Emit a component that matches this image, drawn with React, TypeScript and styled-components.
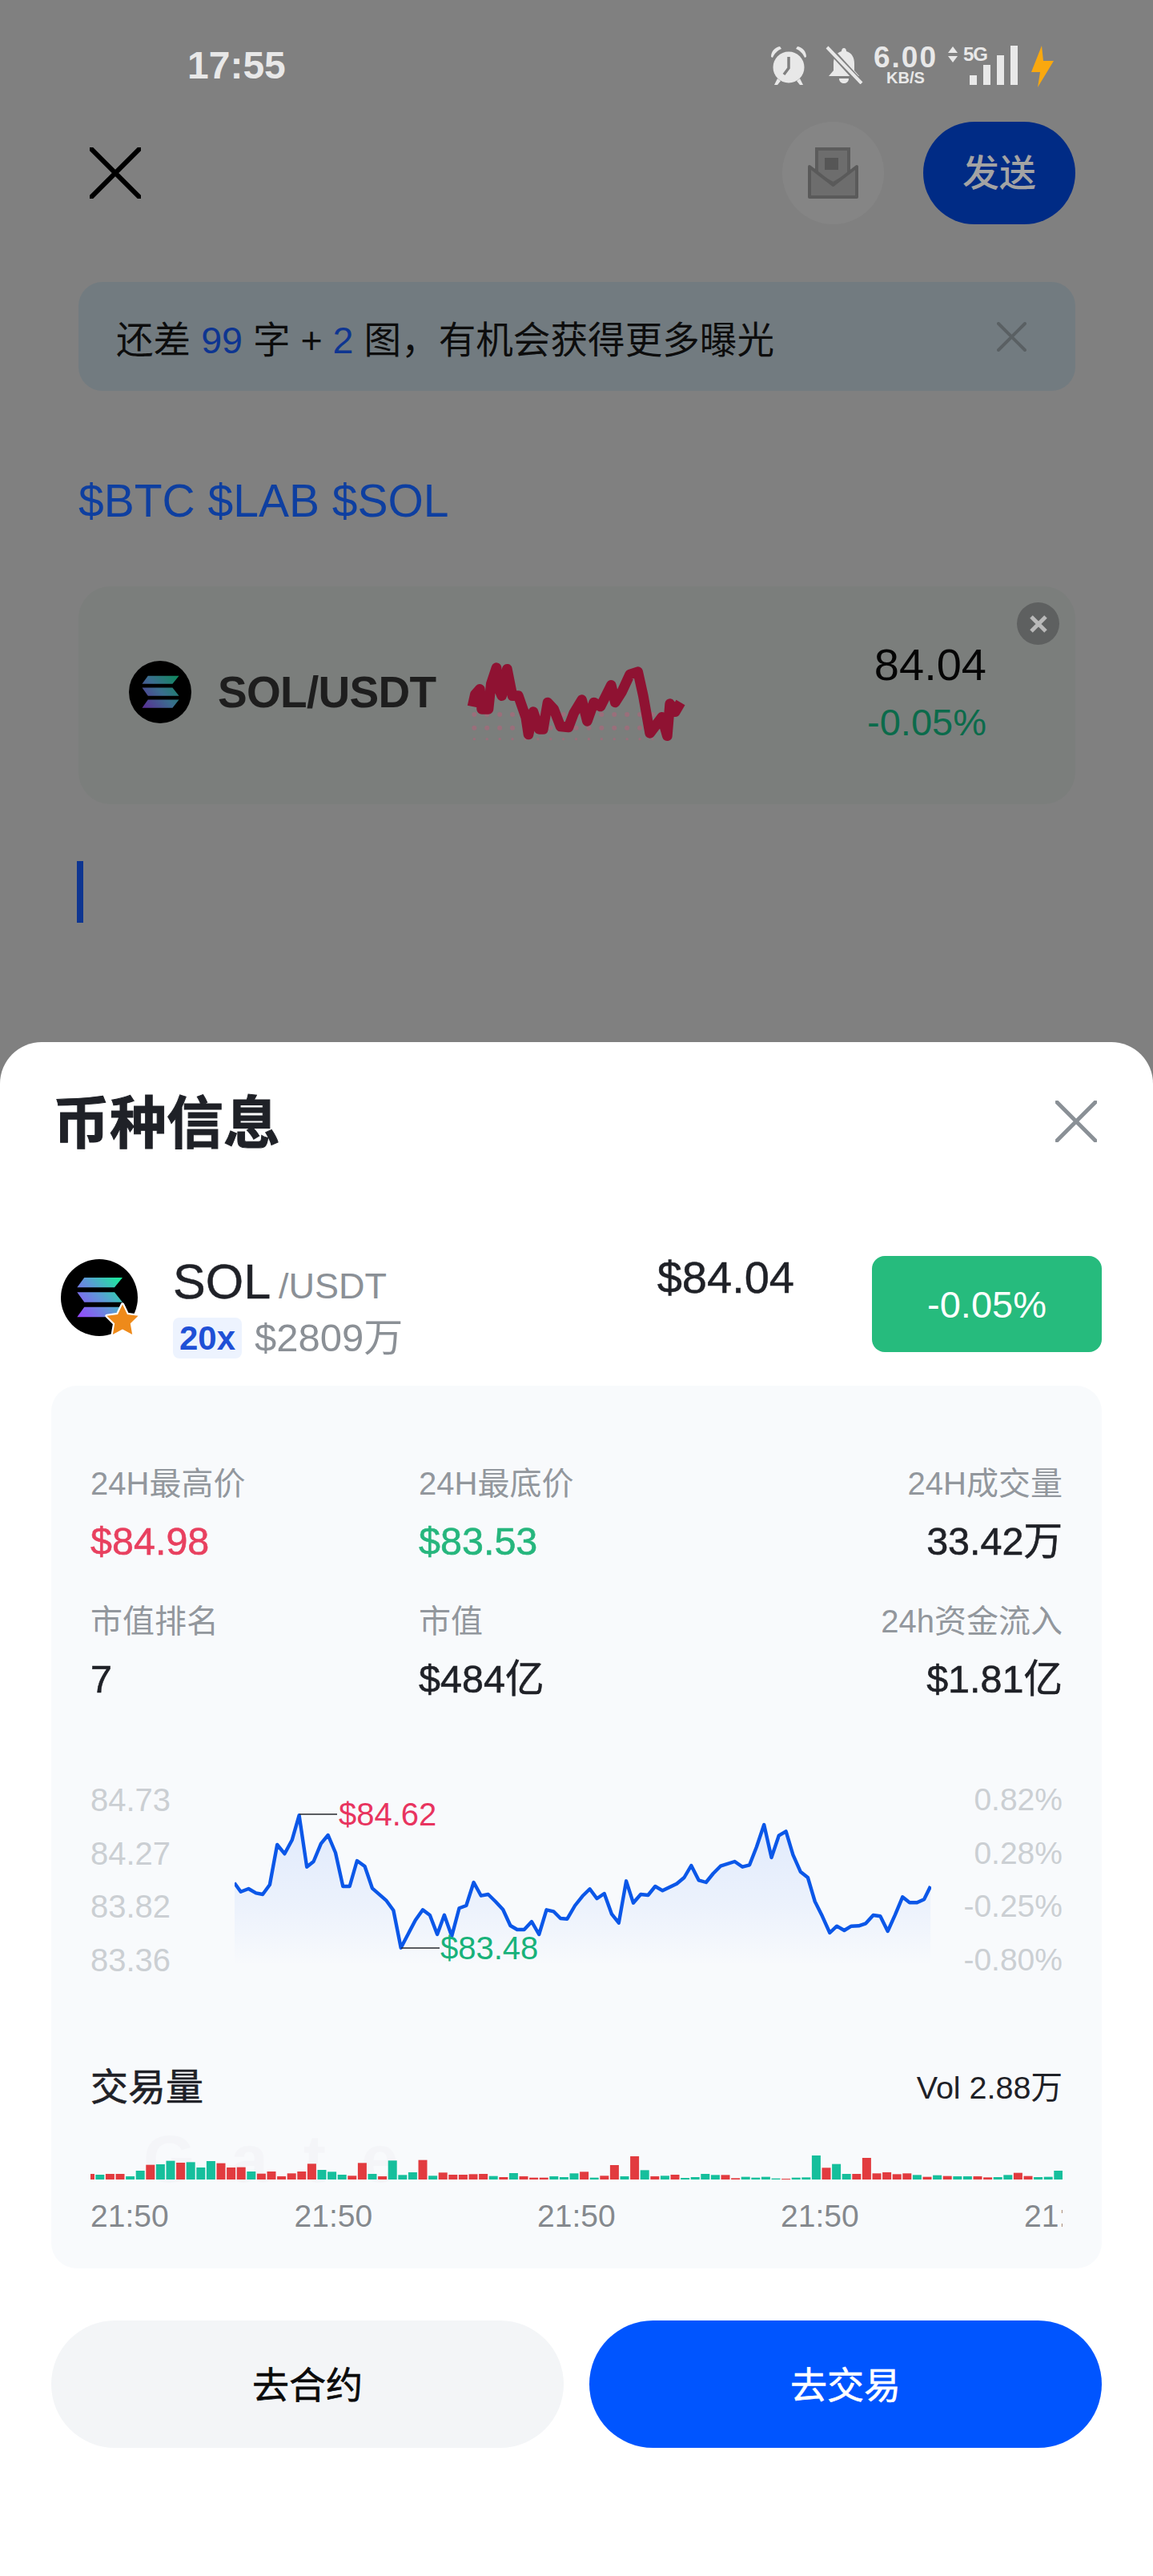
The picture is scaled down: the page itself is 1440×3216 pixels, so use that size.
import React from 'react';
import styled, { createGlobalStyle } from 'styled-components';

const SANS = '"Liberation Sans", "Noto Sans CJK SC", sans-serif';

const GlobalStyle = createGlobalStyle`
	html, body {
		margin: 0;
		padding: 0;
		background: #808080;
	}
	* {
		box-sizing: border-box;
	}
	body {
		font-family: ${SANS};
	}
`;

const Page = styled.div`
	width: 1440px;
	height: 3216px;
	display: flex;
	flex-direction: column;
	overflow: hidden;
	background: #808080;
`;

const Backdrop = styled.div`
	height: 1301px;
	padding: 0 97px 0 98px;
`;

const StatusBar = styled.div`
	height: 152px;
	padding: 57px 27px 0 136px;
	display: flex;
	align-items: flex-start;
	color: #e8e8e8;
`;

const Clock = styled.div`
	font-size: 48px;
	line-height: 50px;
	font-weight: 700;
	margin-right: auto;
`;

const StatusIcon = styled.svg`
	display: block;
	flex: none;
`;

const Speed = styled.div`
	width: 82px;
	margin-left: 12px;
	display: flex;
	flex-direction: column;
	align-items: center;
	font-weight: 700;
`;

const SpeedValue = styled.span`
	font-size: 37px;
	line-height: 30px;
	letter-spacing: 2px;
`;

const SpeedUnit = styled.span`
	font-size: 20px;
	line-height: 20px;
`;

const Network = styled.div`
	position: relative;
	width: 89px;
	height: 50px;
	margin-left: 11px;
`;

const FiveG = styled.span`
	position: absolute;
	left: 20px;
	top: -2px;
	font-size: 24px;
	line-height: 26px;
	font-weight: 700;
	letter-spacing: -1px;
`;

const NavRow = styled.div`
	height: 128px;
	display: flex;
	align-items: center;
`;

const CloseGlyph = styled.svg`
	display: block;
	flex: none;
`;

const NavClose = styled.div`
	margin-left: 14px;
`;

const SheetClose = styled.div`
	margin-top: -6px;
`;

const DraftButton = styled.div`
	width: 127px;
	height: 128px;
	margin-left: auto;
	border-radius: 50%;
	background: #858585;
	display: flex;
	align-items: center;
	justify-content: center;
`;

const SendButton = styled.div`
	width: 190px;
	height: 128px;
	margin-left: 49px;
	padding-bottom: 8px;
	border-radius: 64px;
	background: #002b85;
	color: #a3a3a3;
	font-size: 46px;
	font-weight: 500;
	display: flex;
	align-items: center;
	justify-content: center;
`;

const Banner = styled.div`
	height: 136px;
	margin-top: 72px;
	padding: 0 61px 0 47px;
	border-radius: 30px;
	background: #727b80;
	display: flex;
	align-items: center;
	justify-content: space-between;
	color: #0d0d0d;
	font-size: 46.6px;
`;

const BannerHint = styled.span`
	color: #0e3591;
`;

const Tags = styled.div`
	height: 60px;
	margin-top: 107px;
	color: #0e3fa0;
	font-size: 57px;
	line-height: 60px;
`;

const PairCard = styled.div`
	position: relative;
	height: 272px;
	margin-top: 77px;
	padding: 0 111px 8px 63px;
	border-radius: 40px;
	background: #7b7e7c;
	display: flex;
	align-items: center;
`;

const PairName = styled.div`
	margin-left: 33px;
	color: #1e1e1e;
	font-size: 55px;
	font-weight: 700;
	letter-spacing: -0.7px;
`;

const Spark = styled.svg`
	display: block;
	flex: none;
	margin: 16px 0 0 16px;
`;

const PairQuote = styled.div`
	margin-left: auto;
	display: flex;
	flex-direction: column;
	align-items: flex-end;
`;

const PairPrice = styled.span`
	color: #050505;
	font-size: 56px;
	line-height: 64px;
`;

const PairChange = styled.span`
	margin-top: 12px;
	color: #0b6b4b;
	font-size: 47px;
	line-height: 56px;
`;

const RemoveBadge = styled.div`
	position: absolute;
	top: 20px;
	right: 20px;
	width: 53px;
	height: 53px;
	border-radius: 50%;
	background: #5e6060;
	display: flex;
	align-items: center;
	justify-content: center;
`;

const Caret = styled.div`
	width: 8px;
	height: 77px;
	margin: 71px 0 0 -2px;
	background: #0e3591;
`;

const Sheet = styled.div`
	flex: 1;
	padding: 69px 64px 0;
	background: #ffffff;
	border-radius: 52px 52px 0 0;
`;

const SheetHeader = styled.div`
	height: 66px;
	padding: 0 6px 0 2px;
	display: flex;
	align-items: center;
	justify-content: space-between;
`;

const SheetTitle = styled.h1`
	margin: 0;
	color: #1f2127;
	font-size: 71px;
	line-height: 66px;
	font-weight: 700;
	-webkit-text-stroke: 1px #1f2127;
`;

const CoinRow = styled.div`
	height: 120px;
	margin-top: 132px;
	display: flex;
	align-items: flex-start;
`;

const CoinIcon = styled.div`
	position: relative;
	width: 96px;
	height: 96px;
	margin: 4px 0 0 12px;
	flex: none;
`;

const StarMark = styled.svg`
	position: absolute;
	left: 52px;
	top: 51px;
`;

const CoinText = styled.div`
	margin-left: 44px;
`;

const CoinName = styled.div`
	height: 64px;
	display: flex;
	align-items: baseline;
	color: #1f2127;
	font-size: 61px;
	line-height: 64px;
	-webkit-text-stroke: 0.5px #1f2127;
`;

const CoinQuote = styled.span`
	margin-left: 10px;
	color: #8b9096;
	font-size: 45px;
	-webkit-text-stroke: 0;
`;

const CoinMeta = styled.div`
	margin-top: 13px;
	height: 51px;
	display: flex;
	align-items: center;
`;

const Leverage = styled.span`
	height: 51px;
	padding: 0 8px;
	border-radius: 8px;
	background: #edf3fe;
	color: #1f50d6;
	font-size: 42px;
	line-height: 51px;
	font-weight: 700;
`;

const MarketCap = styled.span`
	margin-left: 16px;
	color: #8b9096;
	font-size: 49px;
	line-height: 51px;
`;

const CoinPrice = styled.div`
	margin-left: auto;
	margin-top: -3px;
	color: #1f2127;
	font-size: 56px;
	line-height: 60px;
	-webkit-text-stroke: 0.5px #1f2127;
`;

const ChangePill = styled.div`
	width: 287px;
	height: 120px;
	margin-left: 97px;
	border-radius: 16px;
	background: #26bb7d;
	color: #ffffff;
	font-size: 47px;
	display: flex;
	align-items: center;
	justify-content: center;
`;

const Panel = styled.div`
	height: 1102px;
	margin-top: 42px;
	padding: 97px 49px 0;
	border-radius: 32px;
	background: #f8fafc;
`;

const StatsGrid = styled.div`
	display: grid;
	grid-template-columns: 410px 1fr auto;
	row-gap: 45px;
`;

const Stat = styled.div<{ $right?: boolean }>`
	display: flex;
	flex-direction: column;
	align-items: ${(p) => (p.$right ? 'flex-end' : 'flex-start')};
`;

const StatLabel = styled.span`
	color: #92979d;
	font-size: 40px;
	line-height: 50px;
`;

const StatValue = styled.span<{ $tone?: 'up' | 'down' }>`
	margin-top: 17px;
	color: ${(p) => (p.$tone === 'up' ? '#e8405f' : p.$tone === 'down' ? '#26b67d' : '#1f2127')};
	font-size: 48.5px;
	line-height: 60px;
	-webkit-text-stroke: 0.6px currentColor;
`;

const ChartRow = styled.div`
	height: 267px;
	margin-top: 88px;
	display: flex;
`;

const AxisColumn = styled.div<{ $right?: boolean }>`
	flex: ${(p) => (p.$right ? '1' : '0 0 180px')};
	display: flex;
	flex-direction: column;
	align-items: ${(p) => (p.$right ? 'flex-end' : 'flex-start')};
`;

const AxisLabel = styled.span<{ $right?: boolean }>`
	height: 66.7px;
	color: #cbcfd3;
	font-size: ${(p) => (p.$right ? 39 : 40)}px;
	line-height: 66.7px;
`;

const Plot = styled.svg`
	display: block;
	flex: none;
`;

const PlotNote = styled.text<{ $tone: 'up' | 'down' }>`
	fill: ${(p) => (p.$tone === 'up' ? '#e8345f' : '#18b27a')};
	font-family: ${SANS};
	font-size: 40px;
`;

const VolumeHead = styled.div`
	height: 50px;
	margin-top: 95px;
	display: flex;
	align-items: center;
	justify-content: space-between;
	color: #1f2127;
`;

const VolumeTitle = styled.span`
	font-size: 47px;
	-webkit-text-stroke: 0.6px #1f2127;
`;

const VolumeValue = styled.span`
	font-size: 39.5px;
	margin-top: 2px;
`;

const VolumeArea = styled.div`
	position: relative;
	height: 95px;
	display: flex;
	align-items: flex-end;
`;

const Watermark = styled.span`
	position: absolute;
	left: 66px;
	top: 34px;
	color: #f4f5f8;
	font-size: 84px;
	line-height: 70px;
	font-weight: 700;
	letter-spacing: 44px;
`;

const VolumeBars = styled.svg`
	position: relative;
	display: block;
`;

const Ticks = styled.div`
	height: 46px;
	margin-top: 23px;
	display: flex;
	overflow: hidden;
`;

const Tick = styled.span<{ $w: number }>`
	flex: none;
	width: ${(p) => p.$w}px;
	color: #85898e;
	font-size: 39px;
	line-height: 46px;
	white-space: nowrap;
`;

const Actions = styled.div`
	margin-top: 65px;
	display: flex;
	gap: 32px;
`;

const ActionButton = styled.div<{ $primary?: boolean }>`
	width: 640px;
	height: 159px;
	padding-bottom: 6px;
	border-radius: 80px;
	background: ${(p) => (p.$primary ? '#0055ff' : '#f3f5f7')};
	color: ${(p) => (p.$primary ? '#ffffff' : '#0b0b0b')};
	font-size: 46px;
	-webkit-text-stroke: 0.6px currentColor;
	display: flex;
	align-items: center;
	justify-content: center;
`;

const X = ({ size, stroke, width }: { size: number; stroke: string; width: number }) => (
	<CloseGlyph width={size} height={size} viewBox={`0 0 ${size} ${size}`}>
		<path d={`M2 2L${size - 2} ${size - 2}M${size - 2} 2L2 ${size - 2}`} stroke={stroke} strokeWidth={width} strokeLinecap="round" />
	</CloseGlyph>
);

const SolanaMark = ({ size, id, dim }: { size: number; id: string; dim?: boolean }) => (
	<svg width={size} height={size} viewBox="0 0 96 96" style={{ display: 'block', flex: 'none' }}>
		<defs>
			<linearGradient id={id} x1="20" y1="72" x2="77" y2="23" gradientUnits="userSpaceOnUse">
				<stop offset="0" stopColor={dim ? '#5a2c96' : '#9945ff'} />
				<stop offset="0.5" stopColor={dim ? '#3b6d8f' : '#5f97d8'} />
				<stop offset="1" stopColor={dim ? '#0d8a5a' : '#14f195'} />
			</linearGradient>
		</defs>
		<circle cx="48" cy="48" r="48" fill="#000" />
		<path
			d="M29.3 23H77L67 35.3H20.3ZM20.3 41.3H67L77 53.7H29.3ZM29.3 59.7H77L67 72.3H20.3Z"
			fill={`url(#${id})`}
		/>
	</svg>
);

const SPARK: number[][] = [
	[90, 240], [100, 195], [118, 175], [125, 250], [150, 250], [160, 155], [180, 95], [190, 175], [200, 200],
	[220, 100], [240, 200], [262, 200], [290, 280], [300, 345], [318, 260], [340, 325], [355, 325], [372, 225],
	[395, 250], [420, 315], [450, 318], [470, 265], [500, 215], [520, 295], [545, 225], [570, 240], [610, 160],
	[625, 225], [650, 185], [680, 120], [710, 110], [730, 200], [755, 340], [800, 280], [820, 350], [830, 230],
	[850, 260], [870, 225],
];

const Sparkline = () => {
	const dots: React.ReactNode[] = [];
	[270, 320, 362].forEach((y, row) => {
		for (let x = 97; x <= 860; x += 47.7) {
			dots.push(<circle key={`${row}-${x}`} cx={x} cy={y} r={row === 2 ? 5 : 9} fill="#9a6f7b" />);
		}
	});
	return (
		<Spark width="320" height="140" viewBox="0 0 960 420">
			{dots}
			<polyline points={SPARK.map((p) => p.join(',')).join(' ')} fill="none" stroke="#8f1232" strokeWidth="38" strokeLinejoin="round" />
		</Spark>
	);
};

// traced off the reference, in page pixels once mapped below
const LINE_LEFT: number[][] = [
	[553, 515], [572, 548], [595, 537], [617, 553], [637, 558], [658, 522], [680, 372], [702, 406], [724, 355],
	[745, 262], [768, 455], [788, 435], [810, 368], [831, 336], [853, 402], [875, 528], [895, 528], [917, 432],
	[940, 453], [962, 535], [1003, 580], [1025, 618], [1047, 758], [1068, 708], [1090, 655], [1112, 616],
	[1133, 636], [1155, 708], [1176, 635], [1198, 715], [1220, 610], [1241, 600], [1263, 513], [1285, 563],
	[1306, 558], [1328, 585], [1350, 615], [1372, 675], [1392, 690], [1413, 690], [1435, 660], [1457, 708],
	[1479, 616], [1500, 622],
];
const LINE_RIGHT: number[][] = [
	[0, 648], [20, 650], [43, 600], [65, 565], [87, 538], [108, 574], [130, 555], [152, 632], [173, 665], [195, 508],
	[216, 590], [238, 558], [260, 561], [281, 528], [303, 544], [345, 518], [367, 495], [388, 450], [410, 505],
	[432, 513], [453, 480], [475, 452], [517, 435], [540, 455], [561, 448], [582, 380], [604, 297], [626, 420],
	[648, 338], [669, 322], [690, 410], [712, 473], [734, 495], [755, 585], [777, 640], [799, 702], [820, 677],
	[842, 693], [863, 677], [885, 676], [906, 667], [928, 636], [949, 640], [971, 696], [993, 635], [1015, 568],
	[1036, 589], [1058, 589], [1079, 577], [1098, 528],
];
const PLOT_X = 293;
const PLOT_Y = 2215;
const mapLine = (pts: number[][], originX: number) =>
	pts.map(([x, y]) => [+(x / 2.376 + originX - PLOT_X).toFixed(1), +(y / 3 + 2180 - PLOT_Y).toFixed(1)]);
const LINE = [...mapLine(LINE_LEFT, 60), ...mapLine(LINE_RIGHT, 700)];
const LINE_STR = LINE.map((p) => p.join(',')).join(' ');
const AREA_STR = `${LINE[0][0]},240 ${LINE_STR} ${LINE[LINE.length - 1][0]},240`;

const PriceChart = () => (
	<Plot width="870" height="267" viewBox="0 0 870 267">
		<defs>
			<linearGradient id="areaFill" x1="0" y1="0" x2="0" y2="1">
				<stop offset="0" stopColor="#0055ff" stopOpacity="0.1" />
				<stop offset="0.6" stopColor="#0055ff" stopOpacity="0.05" />
				<stop offset="1" stopColor="#0055ff" stopOpacity="0" />
			</linearGradient>
		</defs>
		<polygon points={AREA_STR} fill="url(#areaFill)" />
		<polyline points={LINE_STR} fill="none" stroke="#0b57e8" strokeWidth="4.4" strokeLinejoin="round" />
		<path d="M81 51H128M208 218H256" stroke="#26282c" strokeWidth="1.5" fill="none" />
		<PlotNote $tone="up" x="130" y="65">$84.62</PlotNote>
		<PlotNote $tone="down" x="257" y="232">$83.48</PlotNote>
	</Plot>
);

const BARS: [string, number][] = (
	'r465 g468 r465 r465 g474 g453 r431 g429 g416 r423 g421 g441 g417 r425 r441 r440 g456 r464 r456 r474 r463 r456 r427 g450 g457 g468 r472 r424 g465 r474 g415 g469 g459 r413 g472 r460 r468 r468 r466 r465 g473 r477 g462 r474 r479 r479 g474 g477 ' +
	'g463 r457 g479 r472 r432 g474 r399 g451 r474 g472 r468 g480 g477 g465 g469 r469 r481 g476 g479 g476 g482 r483 g479 g478 g396 r442 g428 g465 r465 r405 r463 r459 r466 r463 g469 r476 g470 r473 g474 g474 r474 r478 g477 g469 r461 r473 g477 g476 g453'
)
	.split(' ')
	.map((b) => [b[0], Number(b.slice(1))] as [string, number]);

const VolumeChart = () => (
	<VolumeBars width="1214" height="32" viewBox="0 0 1214 32">
		{BARS.map(([tone, top], i) => {
			const h = (486 - top) / 3;
			const x = i === 0 ? 0 : 6.3 + (i - 1) * 12.6;
			return <rect key={i} x={x} y={32 - h} width={i === 0 ? 5 : 11} height={h} fill={tone === 'r' ? '#e23b3f' : '#16bf9c'} />;
		})}
	</VolumeBars>
);

export default function App() {
	return (
		<Page>
			<GlobalStyle />
			<Backdrop>
				<StatusBar>
					<Clock>17:55</Clock>
					<StatusIcon width="50" height="50" viewBox="0 0 50 50">
						<path d="M3 14C3 7 8 2 14 1L16 4C11 6 7 10 5 15ZM47 14C47 7 42 2 36 1L34 4C39 6 43 10 45 15Z" fill="#e8e8e8" />
						<circle cx="25" cy="27" r="19.5" fill="#e8e8e8" />
						<path d="M25 14V28L19 36" stroke="#808080" strokeWidth="3.5" fill="none" />
						<path d="M11 41L7 49H11L15 44ZM39 41L43 49H39L35 44Z" fill="#e8e8e8" />
					</StatusIcon>
					<StatusIcon width="48" height="48" viewBox="0 0 48 48" style={{ marginLeft: 20 }}>
						<path d="M24 3C26 3 27 5 27 7C34 9 37 15 37 22V31L43 38H5L11 31V22C11 15 14 9 21 7C21 5 22 3 24 3Z" fill="#e8e8e8" />
						<path d="M18 41H30C30 45 27 47 24 47C21 47 18 45 18 41Z" fill="#e8e8e8" />
						<path d="M2 0L44 46" stroke="#808080" strokeWidth="8" />
						<path d="M3 2L46 47" stroke="#e8e8e8" strokeWidth="4" />
					</StatusIcon>
					<Speed>
						<SpeedValue>6.00</SpeedValue>
						<SpeedUnit>KB/S</SpeedUnit>
					</Speed>
					<Network>
						<svg width="14" height="20" viewBox="0 0 14 20" style={{ display: 'block', position: 'absolute', left: 0, top: 1 }}>
							<path d="M7 0L13 8H1ZM1 12H13L7 20Z" fill="#e8e8e8" />
						</svg>
						<FiveG>5G</FiveG>
						<svg width="61" height="50" viewBox="0 0 61 50" style={{ display: 'block', position: 'absolute', right: 0, top: 0 }}>
							<path d="M0 37H9V49H0ZM17 24H26V49H17ZM34 12H43V49H34ZM51 0H60V49H51Z" fill="#e8e8e8" />
						</svg>
					</Network>
					<StatusIcon width="29" height="52" viewBox="0 0 29 52" style={{ marginLeft: 15 }}>
						<path d="M14 0L1 33H12L9 52L29 19H16Z" fill="#f9a80f" />
					</StatusIcon>
				</StatusBar>
				<NavRow>
					<NavClose>
						<X size={64} stroke="#000" width={6} />
					</NavClose>
					<DraftButton>
						<svg width="63" height="64" viewBox="0 0 63 64">
							<path d="M11 2H51V34L31.5 45L11 34Z" fill="#6d6d6d" stroke="#5c5c5c" strokeWidth="4" />
							<path d="M21 13H38V28H21Z" fill="#565656" />
							<path d="M2 24L31.5 47L61 24V62H2Z" fill="#6d6d6d" stroke="#5a5a5a" strokeWidth="4" strokeLinejoin="round" />
						</svg>
					</DraftButton>
					<SendButton>发送</SendButton>
				</NavRow>
				<Banner>
					<span>
						还差 <BannerHint>99</BannerHint> 字 + <BannerHint>2</BannerHint> 图，有机会获得更多曝光
					</span>
					<X size={37} stroke="#5a6063" width={4} />
				</Banner>
				<Tags>$BTC $LAB $SOL</Tags>
				<PairCard>
					<SolanaMark size={78} id="solCard" dim />
					<PairName>SOL/USDT</PairName>
					<Sparkline />
					<PairQuote>
						<PairPrice>84.04</PairPrice>
						<PairChange>-0.05%</PairChange>
					</PairQuote>
					<RemoveBadge>
						<svg width="24" height="24" viewBox="0 0 24 24">
							<path d="M3 3L21 21M21 3L3 21" stroke="#b9b9b9" strokeWidth="5" />
						</svg>
					</RemoveBadge>
				</PairCard>
				<Caret />
			</Backdrop>
			<Sheet>
				<SheetHeader>
					<SheetTitle>币种信息</SheetTitle>
					<SheetClose>
						<X size={52} stroke="#8a9096" width={5} />
					</SheetClose>
				</SheetHeader>
				<CoinRow>
					<CoinIcon>
						<SolanaMark size={96} id="solSheet" />
						<StarMark width="50" height="50" viewBox="0 0 46 46">
							<path
								d="M23 5L28.5 16.5L41 18.2L32 27L34.2 39.5L23 33.5L11.8 39.5L14 27L5 18.2L17.5 16.5Z"
								fill="#ee8a1a"
								stroke="#ffffff"
								strokeWidth="4"
								strokeLinejoin="round"
								paintOrder="stroke"
							/>
						</StarMark>
					</CoinIcon>
					<CoinText>
						<CoinName>
							SOL<CoinQuote>/USDT</CoinQuote>
						</CoinName>
						<CoinMeta>
							<Leverage>20x</Leverage>
							<MarketCap>$2809万</MarketCap>
						</CoinMeta>
					</CoinText>
					<CoinPrice>$84.04</CoinPrice>
					<ChangePill>-0.05%</ChangePill>
				</CoinRow>
				<Panel>
					<StatsGrid>
						<Stat>
							<StatLabel>24H最高价</StatLabel>
							<StatValue $tone="up">$84.98</StatValue>
						</Stat>
						<Stat>
							<StatLabel>24H最底价</StatLabel>
							<StatValue $tone="down">$83.53</StatValue>
						</Stat>
						<Stat $right>
							<StatLabel>24H成交量</StatLabel>
							<StatValue>33.42万</StatValue>
						</Stat>
						<Stat>
							<StatLabel>市值排名</StatLabel>
							<StatValue>7</StatValue>
						</Stat>
						<Stat>
							<StatLabel>市值</StatLabel>
							<StatValue>$484亿</StatValue>
						</Stat>
						<Stat $right>
							<StatLabel>24h资金流入</StatLabel>
							<StatValue>$1.81亿</StatValue>
						</Stat>
					</StatsGrid>
					<ChartRow>
						<AxisColumn>
							<AxisLabel>84.73</AxisLabel>
							<AxisLabel>84.27</AxisLabel>
							<AxisLabel>83.82</AxisLabel>
							<AxisLabel>83.36</AxisLabel>
						</AxisColumn>
						<PriceChart />
						<AxisColumn $right>
							<AxisLabel $right>0.82%</AxisLabel>
							<AxisLabel $right>0.28%</AxisLabel>
							<AxisLabel $right>-0.25%</AxisLabel>
							<AxisLabel $right>-0.80%</AxisLabel>
						</AxisColumn>
					</ChartRow>
					<VolumeHead>
						<VolumeTitle>交易量</VolumeTitle>
						<VolumeValue>Vol 2.88万</VolumeValue>
					</VolumeHead>
					<VolumeArea>
						<Watermark>Gate</Watermark>
						<VolumeChart />
					</VolumeArea>
					<Ticks>
						<Tick $w={254.5}>21:50</Tick>
						<Tick $w={303.5}>21:50</Tick>
						<Tick $w={304}>21:50</Tick>
						<Tick $w={304}>21:50</Tick>
						<Tick $w={304}>21:50</Tick>
					</Ticks>
				</Panel>
				<Actions>
					<ActionButton>去合约</ActionButton>
					<ActionButton $primary>去交易</ActionButton>
				</Actions>
			</Sheet>
		</Page>
	);
}
